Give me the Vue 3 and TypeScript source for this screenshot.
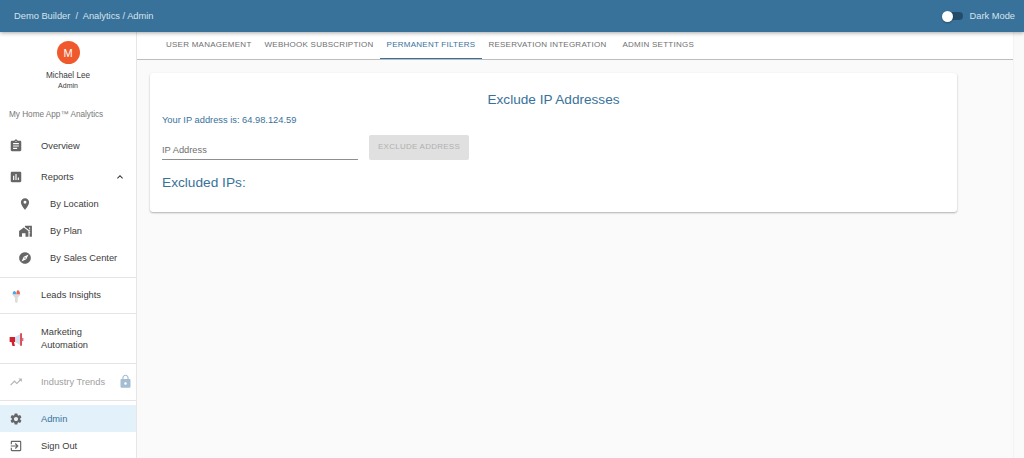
<template>
  <div class="page">
    <header class="topbar">
      <div class="crumbs">Demo Builder&nbsp; /&nbsp; Analytics / Admin</div>
      <div class="dark-toggle">
        <span class="switch"><span class="knob"></span></span>
        <span>Dark Mode</span>
      </div>
    </header>
    <div class="body-row">
      <aside class="sidebar">
        <div class="profile">
          <div class="avatar">M</div>
          <div class="name">Michael Lee</div>
          <div class="role">Admin</div>
        </div>
        <div class="app-name">My Home App™ Analytics</div>

        <div class="item first">
          <svg class="icon" viewBox="0 0 24 24"><path d="M19 3h-4.18C14.4 1.84 13.3 1 12 1s-2.4.84-2.82 2H5c-1.1 0-2 .9-2 2v14c0 1.1.9 2 2 2h14c1.1 0 2-.9 2-2V5c0-1.1-.9-2-2-2zm-7 0c.55 0 1 .45 1 1s-.45 1-1 1-1-.45-1-1 .45-1 1-1zm2 14H7v-2h7v2zm3-4H7v-2h10v2zm0-4H7V7h10v2z"/></svg>
          <span>Overview</span>
        </div>
        <div class="item">
          <svg class="icon" viewBox="0 0 24 24"><path d="M19 3H5c-1.1 0-2 .9-2 2v14c0 1.1.9 2 2 2h14c1.1 0 2-.9 2-2V5c0-1.1-.9-2-2-2zM9 17H7v-7h2v7zm4 0h-2V7h2v10zm4 0h-2v-4h2v4z"/></svg>
          <span>Reports</span>
          <svg class="chev" viewBox="0 0 24 24"><path d="M7.41 15.41 12 10.83l4.59 4.58L18 14l-6-6-6 6z"/></svg>
        </div>
        <div class="item sub">
          <svg class="icon" viewBox="0 0 24 24"><path d="M12 2C8.13 2 5 5.13 5 9c0 5.25 7 13 7 13s7-7.75 7-13c0-3.87-3.13-7-7-7zm0 9.5a2.5 2.5 0 1 1 0-5 2.5 2.5 0 0 1 0 5z"/></svg>
          <span>By Location</span>
        </div>
        <div class="item sub">
          <svg class="icon plan" viewBox="0 0 24 24"><path d="M1 22V12l8-6 8 6v10h-5v-6H6v6H1zM11 3h12v19h-4V11l-8-6V3zm7 3v2h2V6h-2zm0 4v2h2v-2h-2zm2 4h-1v2h1v-2z"/></svg>
          <span>By Plan</span>
        </div>
        <div class="item sub">
          <svg class="icon" viewBox="0 0 24 24"><path d="M12 10.9c-.61 0-1.1.49-1.1 1.1s.49 1.1 1.1 1.1 1.1-.49 1.1-1.1-.49-1.1-1.1-1.1zM12 2C6.48 2 2 6.48 2 12s4.48 10 10 10 10-4.48 10-10S17.52 2 12 2zm2.19 12.19L6 18l3.81-8.19L18 6l-3.81 8.19z"/></svg>
          <span>By Sales Center</span>
        </div>
        <div class="divider reports-end"></div>

        <div class="item tall leads">
          <svg class="icon colored" viewBox="0 0 24 24">
            <path d="M6 11h13l-4.5 5v6.5L12.5 24l-2-1.5V16z" fill="#dcdcdc"/>
            <path d="M7 11c0-3 1-5 2.500-5S12.500 8 12.500 11z" fill="#4ea6e0"/>
            <path d="M12.500 11c0-3 .7-6 2.500-6s3 3 3 6z" fill="#e9634f"/>
          </svg>
          <span>Leads Insights</span>
        </div>
        <div class="divider"></div>
        <div class="item multi">
          <svg class="icon mega" viewBox="0 0 24 24">
            <path d="M1 8h9v8H8l1.500 6.500H5.500L4 16H1z" fill="#d3202e"/>
            <path d="M10 8l8-5v18l-8-5z" fill="#cfe3f1"/>
            <path d="M18 2h2.500v20H18z" fill="#d3202e"/>
            <path d="M20.500 9.500H23v5h-2.500z" fill="#e2707a"/>
          </svg>
          <span>Marketing<br />Automation</span>
        </div>
        <div class="divider"></div>
        <div class="item tall muted">
          <svg class="icon" viewBox="0 0 24 24"><path d="m16 6 2.290 2.290-4.880 4.880-4-4L2 16.590 3.410 18l6-6 4 4 6.300-6.290L22 12V6z"/></svg>
          <span>Industry Trends</span>
          <svg class="lock" viewBox="0 0 24 24"><path d="M18 8h-1V6c0-2.760-2.240-5-5-5S7 3.240 7 6v2H6c-1.100 0-2 .9-2 2v10c0 1.100.9 2 2 2h12c1.100 0 2-.9 2-2V10c0-1.100-.9-2-2-2zm-6 9c-1.100 0-2-.9-2-2s.9-2 2-2 2 .9 2 2-.9 2-2 2zm3.100-9H8.900V6c0-1.710 1.390-3.100 3.100-3.100s3.100 1.390 3.100 3.100v2z"/></svg>
        </div>
        <div class="divider"></div>
        <div class="item active">
          <svg class="icon" viewBox="0 0 24 24"><path d="M19.140 12.940c.04-.3.06-.61.06-.94 0-.32-.02-.64-.07-.94l2.030-1.580a.49.49 0 0 0 .12-.61l-1.920-3.320a.488.488 0 0 0-.59-.22l-2.390.96c-.5-.38-1.030-.7-1.620-.94l-.36-2.540a.484.484 0 0 0-.48-.41h-3.840c-.24 0-.43.17-.47.41l-.36 2.540c-.59.24-1.130.57-1.620.94l-2.390-.96c-.22-.08-.47 0-.59.22L2.740 8.870c-.12.21-.08.47.12.61l2.030 1.580c-.05.3-.09.63-.09.94s.02.64.07.94l-2.030 1.580a.49.49 0 0 0-.12.61l1.920 3.320c.12.22.37.29.59.22l2.390-.96c.5.38 1.030.7 1.620.94l.36 2.540c.05.24.24.41.48.41h3.840c.24 0 .44-.17.47-.41l.36-2.540c.59-.24 1.130-.56 1.620-.94l2.390.96c.22.08.47 0 .59-.22l1.920-3.320c.12-.22.07-.47-.12-.61l-2.010-1.580zM12 15.600c-1.980 0-3.600-1.620-3.600-3.600s1.620-3.600 3.600-3.600 3.600 1.620 3.600 3.600-1.620 3.600-3.600 3.600z"/></svg>
          <span>Admin</span>
        </div>
        <div class="item signout">
          <svg class="icon" viewBox="0 0 24 24"><path d="M10.090 15.590 11.500 17l5-5-5-5-1.410 1.410L12.670 11H3v2h9.670l-2.580 2.590zM19 3H5c-1.110 0-2 .9-2 2v4h2V5h14v14H5v-4H3v4c0 1.100.89 2 2 2h14c1.100 0 2-.9 2-2V5c0-1.100-.9-2-2-2z"/></svg>
          <span>Sign Out</span>
        </div>
      </aside>

      <main class="content">
        <nav class="tabs">
          <div v-for="tab in tabs" :key="tab" :class="['tab', { current: tab === activeTab }]">{{ tab }}</div>
        </nav>
        <section class="card">
          <h2 class="card-title">Exclude IP Addresses</h2>
          <p class="ip-line">Your IP address is: 64.98.124.59</p>
          <div class="form-row">
            <div class="field">IP Address</div>
            <button class="exclude-btn" disabled>EXCLUDE ADDRESS</button>
          </div>
          <h3 class="excluded">Excluded IPs:</h3>
        </section>
      </main>
    </div>
  </div>
</template>

<script setup lang="ts">
const tabs: string[] = [
  'User Management',
  'Webhook Subscription',
  'Permanent Filters',
  'Reservation Integration',
  'Admin Settings',
]
const activeTab = 'Permanent Filters'
</script>

<style>
html, body { margin: 0; background: #fafafa; overflow: hidden; }
</style>

<style scoped>
.page {
  width: 1024px;
  height: 458px;
  overflow: hidden;
  display: flex;
  flex-direction: column;
  font-family: "Liberation Sans", Arial, sans-serif;
  color: #3c3c3c;
  background: #fafafa;
}
.topbar {
  height: 32px;
  flex-shrink: 0;
  display: flex;
  align-items: center;
  justify-content: space-between;
  padding: 0 9px 0 14px;
  background: #38729a;
  color: #d7e3ec;
  font-size: 9.3px;
  box-shadow: 0 1px 4px rgba(0, 0, 0, 0.35);
  position: relative;
  z-index: 2;
}
.dark-toggle { display: flex; align-items: center; gap: 7px; }
.switch {
  width: 21px;
  height: 8px;
  border-radius: 4px;
  background: #234c6a;
  display: flex;
  align-items: center;
}
.knob {
  width: 11px;
  height: 11px;
  border-radius: 50%;
  background: #fff;
  box-shadow: 0 1px 2px rgba(0, 0, 0, 0.3);
}
.body-row { flex: 1; display: flex; min-height: 0; }
.sidebar {
  width: 137px;
  flex-shrink: 0;
  background: #fff;
  border-right: 1px solid #e6e6e6;
  box-sizing: border-box;
  display: flex;
  flex-direction: column;
  font-size: 9.3px;
}
.profile {
  display: flex;
  flex-direction: column;
  align-items: center;
  padding-top: 9px;
}
.avatar {
  width: 23px;
  height: 23px;
  border-radius: 50%;
  background: #f0592b;
  color: #fff;
  font-size: 11px;
  display: flex;
  align-items: center;
  justify-content: center;
}
.name { font-size: 8.2px; margin-top: 6px; line-height: 11px; }
.role { font-size: 7px; line-height: 10px; }
.app-name {
  font-size: 8.2px;
  color: #777;
  padding-left: 9px;
  margin-top: 18px;
  line-height: 11px;
}
.item {
  height: 27px;
  display: flex;
  align-items: center;
  padding-left: 9px;
  flex-shrink: 0;
  position: relative;
}
.item.first { margin-top: 11px; height: 29px; margin-bottom: 3px; }
.item .icon {
  width: 14px;
  height: 14px;
  fill: #666;
  margin-right: 18px;
  flex-shrink: 0;
}
.item.sub { padding-left: 18px; }
.item.sub .plan { width: 15px; margin-right: 17px; }
.item .colored { width: 16px; height: 16px; margin-left: -1px; margin-right: 17px; }
.item .mega { width: 15px; height: 15px; margin-right: 17px; }
.chev { width: 12px; height: 12px; fill: #333; position: absolute; right: 10px; }
.lock { width: 15px; height: 15px; fill: #a4bdd0; position: absolute; right: 3px; top: 10px; }
.divider { height: 1px; background: #e4e4e4; flex-shrink: 0; }
.reports-end { margin-top: 6px; }
.item.tall { height: 35px; }
.item.leads { box-sizing: border-box; padding-bottom: 1px; }
.item.multi { box-sizing: border-box; height: 49px; padding-top: 1px; line-height: 13.5px; }
.item.muted { height: 36px; color: #a0a0a0; }
.item.muted .icon { fill: #b4b4b4; }
.item.active {
  height: 27px;
  margin-top: 4px;
  background: #e3f1fb;
  color: #38729a;
}
.item.signout { height: 27px; }
.content {
  flex: 1;
  min-width: 0;
  display: flex;
  flex-direction: column;
  margin-right: 10px;
  border-right: 1px solid #f3f3f3;
}
.tabs {
  height: 28px;
  flex-shrink: 0;
  box-sizing: border-box;
  background: #fff;
  border-bottom: 1px solid #bdbdbd;
  display: flex;
  padding-left: 22.5px;
}
.tab {
  height: 27px;
  box-sizing: border-box;
  padding: 0 6.5px 3px;
  display: flex;
  align-items: center;
  font-size: 8px;
  letter-spacing: 0.25px;
  text-transform: uppercase;
  color: #6f6f6f;
}
.tab:last-child { margin-left: 3px; }
.tab.current { color: #38729a; border-bottom: 1px solid #38729a; padding-bottom: 2px; }
.card {
  width: 807px;
  height: 139px;
  box-sizing: border-box;
  margin: 13px 0 0 13px;
  padding: 18px 12px 0;
  background: #fff;
  border-radius: 3px;
  box-shadow: 0 1px 2px rgba(0, 0, 0, 0.3);
  color: #38729a;
}
.card-title {
  margin: 0;
  font-size: 13.6px;
  font-weight: 400;
  line-height: 17px;
  text-align: center;
}
.ip-line { margin: 6px 0 0; font-size: 9.3px; line-height: 12px; }
.form-row { display: flex; gap: 11px; margin-top: 9px; }
.field {
  width: 196px;
  height: 25px;
  box-sizing: border-box;
  border-bottom: 1px solid #8f8f8f;
  color: #6f6f6f;
  font-size: 9.3px;
  padding-top: 9px;
  line-height: 12px;
}
.exclude-btn {
  width: 100px;
  height: 25px;
  border: none;
  border-radius: 2px;
  background: #e0e0e0;
  color: #b0b0b0;
  font-family: inherit;
  font-size: 8px;
  letter-spacing: 0.25px;
  padding: 0 0 3px;
}
.excluded { margin: 14px 0 0; font-size: 13.7px; font-weight: 400; line-height: 18px; }
</style>
